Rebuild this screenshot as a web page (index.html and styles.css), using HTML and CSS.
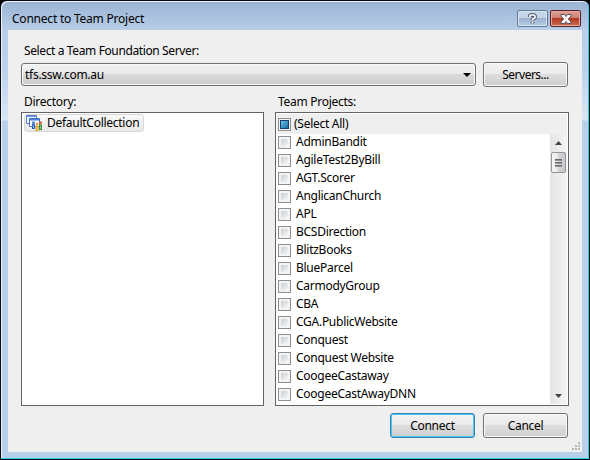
FILE: index.html
```html
<!DOCTYPE html>
<html lang="en">
<head>
<meta charset="utf-8">
<title>Connect to Team Project</title>
<link rel="stylesheet" href="styles.css">
</head>
<body>
<div class="window">
  <header class="titlebar">
    <h1>Connect to Team Project</h1>
    <button class="caption help" aria-label="Help"><svg width="9" height="12" viewBox="0 0 9 12"><path d="M2 4V2.500L3 2H6L7 3V4.500L4.500 6.500V7.500M4.500 9V10.500" fill="none" stroke="#4b5364" stroke-width="3.600"/><path d="M2 4V2.500L3 2H6L7 3V4.500L4.500 6.500V7.500M4.500 9V10.500" fill="none" stroke="#fff" stroke-width="1.700"/></svg></button>
    <button class="caption close" aria-label="Close"><svg width="12" height="10" viewBox="0 0 12 10"><path d="M1 .5H4.500L6 2.500L7.500 .5H11V2L8.300 5L11 8V9.500H7.500L6 7.500L4.500 9.500H1V8L3.700 5L1 2Z" fill="#fff" stroke="#59505c"/></svg></button>
  </header>
  <main class="client">
    <label class="server-label"><span class="t">Select a Team Foundation Server:</span></label>
    <div class="server-row">
      <div class="combo"><span class="t">tfs.ssw.com.au</span><svg width="8" height="4" viewBox="0 0 8 4"><path d="M0 0H8L4 4Z"/></svg></div>
      <button class="button servers">Servers...</button>
    </div>
    <div class="columns">
      <section class="directory">
        <h2>Directory:</h2>
        <div class="list">
          <div class="node">
            <svg width="17" height="16" viewBox="0 0 17 16"><path d="M.5 .5H10.500V8.500H.5Z" fill="#eef5ff" stroke="#5c7fc8"/><path d="M1 1H10V2H1Z" fill="#6a97e4"/><path d="M3.500 3.500H13.500V11.500H3.500Z" fill="#fff" stroke="#426fbe"/><path d="M4 4H13V5.500H4Z" fill="#4c82da"/><path d="M6 8.500H9V14H6Z" fill="#2b67c7"/><path d="M9.500 10.500H12.500V16H9.500Z" fill="#e8a323"/><path d="M13 9.500H16V15H13Z" fill="#349538"/><circle cx="7.500" cy="7.500" r="1.300" fill="#3976c8"/><circle cx="11" cy="9" r="1.300" fill="#e99a2a"/><circle cx="14.500" cy="7.700" r="1.500" fill="#e25d35"/><path d="M7.500 10V13M11 12V15M14.500 11V14" stroke="#fff" stroke-opacity=".45"/></svg>
            <span class="t">DefaultCollection</span>
          </div>
        </div>
      </section>
      <section class="projects">
        <h2>Team Projects:</h2>
        <div class="list">
          <div class="row all"><i class="check mixed"></i><span class="t">(Select All)</span></div>
          <div class="scroller">
            <div class="rows">
              <div class="row"><i class="check"></i><span class="t">AdminBandit</span></div>
              <div class="row"><i class="check"></i><span class="t">AgileTest2ByBill</span></div>
              <div class="row"><i class="check"></i><span class="t">AGT.Scorer</span></div>
              <div class="row"><i class="check"></i><span class="t">AnglicanChurch</span></div>
              <div class="row"><i class="check"></i><span class="t">APL</span></div>
              <div class="row"><i class="check"></i><span class="t">BCSDirection</span></div>
              <div class="row"><i class="check"></i><span class="t">BlitzBooks</span></div>
              <div class="row"><i class="check"></i><span class="t">BlueParcel</span></div>
              <div class="row"><i class="check"></i><span class="t">CarmodyGroup</span></div>
              <div class="row"><i class="check"></i><span class="t">CBA</span></div>
              <div class="row"><i class="check"></i><span class="t">CGA.PublicWebsite</span></div>
              <div class="row"><i class="check"></i><span class="t">Conquest</span></div>
              <div class="row"><i class="check"></i><span class="t">Conquest Website</span></div>
              <div class="row"><i class="check"></i><span class="t">CoogeeCastaway</span></div>
              <div class="row"><i class="check"></i><span class="t">CoogeeCastAwayDNN</span></div>
            </div>
            <div class="scrollbar">
              <svg class="up" width="7" height="4" viewBox="0 0 7 4"><path d="M0 4L3.500 0L7 4Z" fill="#444"/></svg>
              <div class="thumb"><i></i><i></i><i></i></div>
              <svg class="down" width="7" height="4" viewBox="0 0 7 4"><path d="M0 0H7L3.500 4Z" fill="#444"/></svg>
            </div>
          </div>
        </div>
      </section>
    </div>
    <footer>
      <button class="button default">Connect</button>
      <button class="button">Cancel</button>
    </footer>
    <svg class="grip" width="9" height="9" viewBox="0 0 9 9" fill="#b9b9b9"><path d="M6 0h2v2H6zM3 3h2v2H3zM6 3h2v2H6zM0 6h2v2H0zM3 6h2v2H3zM6 6h2v2H6z"/></svg>
  </main>
</div>
</body>
</html>
```
FILE: styles.css
```css
* { box-sizing: border-box; }
body {
  margin: 0;
  background: #000;
  color: #000;
  font: 12px/18px "Noto Sans", "Open Sans", sans-serif;
  letter-spacing: -0.27px;
}
.window {
  width: 590px;
  height: 460px;
  padding: 1px 6px 6px 7px;
  border: 1px solid #090b0e;
  border-radius: 7px 7px 0 0;
  background: linear-gradient(#98b3d3 0, #b9cfe9 30px, #bad0eb 65px, #d8e7f6 119px, #b9d0ea 120px);
  box-shadow: inset -1px -1px #26cfea, inset 1px 1px #edf4fb;
}
.titlebar {
  display: flex;
  height: 28px;
  padding: 8px 2px 0 4px;
}
h1 {
  flex: 1;
  margin: 0;
  font-size: 12px;
  font-weight: 400;
  line-height: 18px;
  letter-spacing: -0.22px;
}
.caption {
  display: flex;
  align-items: center;
  justify-content: center;
  width: 31px;
  height: 17px;
  margin-right: 2px;
  padding: 0;
  border: 1px solid #657894;
  border-radius: 2px;
  background: linear-gradient(#c6d6e9 0 45%, #9bb3d0 50%, #b7cde6);
  box-shadow: inset 0 0 0 1px #d5e3f3;
}
.close {
  margin-right: 0;
  border-color: #541d29;
  background: linear-gradient(#dda198 0, #cf8072 45%, #b43922 50%, #cb6e4d);
  box-shadow: inset 0 0 0 1px #e5a99d;
}
.client {
  position: relative;
  display: flex;
  flex-direction: column;
  width: 574px;
  height: 422px;
  padding: 12px 13px 0;
  background: #efefef;
}
.server-label { height: 20px; padding-left: 3px; letter-spacing: -0.38px; }
.server-row { display: flex; align-items: center; gap: 7px; height: 25px; }
.combo {
  display: flex;
  align-items: center;
  justify-content: space-between;
  width: 455px;
  height: 23px;
  padding: 0 4px 0 3px;
  border: 1px solid #707070;
  border-radius: 3px;
  background: linear-gradient(#f2f2f2, #e9e9e9 49%, #d9d9d9 50%, #cecece);
  box-shadow: inset 0 0 0 1px #f8f8f8;
}
.button {
  width: 85px;
  height: 25px;
  padding: 0;
  border: 1px solid #707070;
  border-radius: 3px;
  background: linear-gradient(#f2f2f2, #ebebeb 49%, #dddddd 50%, #cfcfcf);
  box-shadow: inset 0 0 0 1px #fafafa;
  color: #000;
  font: inherit;
  letter-spacing: inherit;
}
.servers { letter-spacing: -0.5px; }
.columns { display: flex; gap: 11px; padding-top: 6px; }
.directory { width: 243px; }
.projects { width: 294px; }
h2 {
  height: 19px;
  margin: 0;
  padding-left: 3px;
  font-size: 12px;
  font-weight: 400;
  line-height: 18px;
}
.list { height: 294px; padding: 1px; border: 1px solid #646464; background: #fff; }
.node {
  display: flex;
  align-items: center;
  gap: 4px;
  width: 120px;
  height: 18px;
  margin: 0 0 0 1px;
  padding-left: 1px;
  border: 1px solid #d9d9d9;
  border-radius: 3px;
  background: linear-gradient(#f9f9f9, #e8e8e8);
}
.row { display: flex; align-items: center; gap: 5px; height: 18px; padding-left: 1px; white-space: nowrap; }
.all { gap: 3px; height: 20px; background: #efefef; }
.scroller { display: flex; justify-content: space-between; }
.rows { margin-top: -1px; }
.check {
  width: 13px;
  height: 13px;
  border: 1px solid #8e8f8f;
  background: linear-gradient(135deg, #c9cfd5, #f6f6f6) content-box, #f4f4f4;
  padding: 2px;
}
.check.mixed {
  background: linear-gradient(135deg, #62c5ec, #176b9d) content-box, #173d68;
  box-shadow: inset 0 0 0 1px #f4f4f4;
}
.scrollbar {
  display: flex;
  flex-direction: column;
  align-items: center;
  width: 17px;
  height: 270px;
  padding: 7px 1px 6px 0;
  background: linear-gradient(90deg, #e5e5e5, #f3f3f3);
}
.thumb {
  display: flex;
  flex-direction: column;
  align-items: center;
  justify-content: center;
  gap: 1px;
  width: 15px;
  height: 21px;
  margin-top: 7px;
  border: 1px solid #979797;
  border-radius: 2px;
  background: linear-gradient(90deg, #f5f5f5, #e8e8eb 49%, #d5d5da 50%, #c5c5cb);
}
.thumb i { width: 7px; height: 2px; background: linear-gradient(#555, #aaa); }
.down { margin-top: auto; }
footer { display: flex; gap: 8px; justify-content: flex-end; padding: 7px 1px 0 0; }
.default { border-color: #3c7fb1; box-shadow: inset 0 0 0 1px #45c8f3; }
.grip { position: absolute; right: 1px; bottom: 1px; }
```
